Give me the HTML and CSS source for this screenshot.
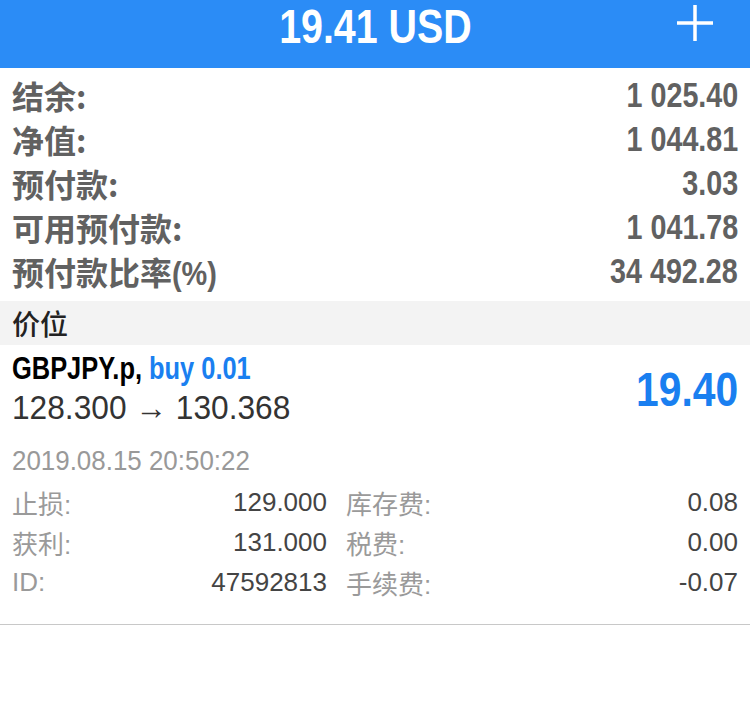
FILE: index.html
```html
<!DOCTYPE html>
<html lang="zh">
<head>
<meta charset="utf-8">
<link rel="stylesheet" href="styles.css">
</head>
<body>
<header class="topbar">
  <div class="title">19.41 USD</div>
  <svg class="plus" width="40" height="40" viewBox="0 0 40 40"><path d="M20 2V38M2 20H38" stroke="#fff" stroke-width="3.5" fill="none"/></svg>
</header>
<section class="summary">
  <div class="srow"><span class="slabel">结余:</span><span class="sval">1 025.40</span></div>
  <div class="srow"><span class="slabel">净值:</span><span class="sval">1 044.81</span></div>
  <div class="srow"><span class="slabel">预付款:</span><span class="sval">3.03</span></div>
  <div class="srow"><span class="slabel">可用预付款:</span><span class="sval">1 041.78</span></div>
  <div class="srow"><span class="slabel">预付款比率<span class="pct">(%)</span></span><span class="sval">34 492.28</span></div>
</section>
<div class="section-head">价位</div>
<section class="trade">
  <div class="trade-top">
    <div class="trade-info">
      <div class="sym">GBPJPY.p, <span class="dir">buy 0.01</span></div>
      <div class="prices">128.300 → 130.368</div>
    </div>
    <div class="profit">19.40</div>
  </div>
  <div class="date">2019.08.15 20:50:22</div>
  <div class="details">
    <span class="dl">止损:</span><span class="dv">129.000</span><span class="dl2">库存费:</span><span class="dv">0.08</span>
    <span class="dl">获利:</span><span class="dv">131.000</span><span class="dl2">税费:</span><span class="dv">0.00</span>
    <span class="dl">ID:</span><span class="dv">47592813</span><span class="dl2">手续费:</span><span class="dv">-0.07</span>
  </div>
</section>
</body>
</html>
```

FILE: styles.css
```css
html, body {
  margin: 0;
  padding: 0;
  background: #fff;
}
body {
  width: 750px;
  font-family: "Liberation Sans", "Noto Sans CJK SC", sans-serif;
}
.topbar {
  height: 68px;
  background: #2b8cf6;
  position: relative;
  display: flex;
  justify-content: center;
  align-items: flex-start;
}
.title {
  color: #fff;
  font-weight: bold;
  font-size: 48px;
  line-height: 52px;
  margin-top: 1px;
  transform: scaleX(0.82);
}
.plus {
  position: absolute;
  right: 35px;
  top: 3px;
}
.summary {
  padding: 5px 12px 8px 12px;
}
.srow {
  height: 44px;
  display: flex;
  justify-content: space-between;
  align-items: center;
  color: #616161;
  font-weight: bold;
}
.slabel {
  font-family: "Noto Sans CJK SC", sans-serif;
  font-size: 32px;
}
.pct {
  font-family: "Liberation Sans", sans-serif;
  font-size: 34px;
  display: inline-block;
  transform: scaleX(0.85);
  transform-origin: left center;
}
.sval {
  font-size: 35px;
  display: inline-block;
  transform: scaleX(0.82);
  transform-origin: right center;
}
.section-head {
  background: #f3f3f3;
  height: 44px;
  line-height: 44px;
  padding: 0 12px;
  font-size: 28px;
  color: #222;
  font-family: "Noto Sans CJK SC", sans-serif;
  font-weight: 500;
}
.trade {
  padding: 0 12px 22px 12px;
  border-bottom: 1px solid #c8c8c8;
}
.trade-top {
  display: flex;
  justify-content: space-between;
  align-items: center;
  padding-top: 5px;
}
.sym {
  font-weight: bold;
  font-size: 31px;
  color: #000;
  height: 38px;
  line-height: 38px;
  transform: scaleX(0.82);
  transform-origin: left center;
  white-space: nowrap;
}
.dir {
  color: #1a7ff0;
}
.prices {
  font-size: 33px;
  color: #333;
  height: 40px;
  line-height: 40px;
  transform: scaleX(0.96);
  transform-origin: left center;
  white-space: nowrap;
}
.profit {
  font-weight: bold;
  font-size: 48px;
  color: #1a7ff0;
  transform: scaleX(0.85);
  transform-origin: right center;
}
.date {
  font-size: 27px;
  color: #999;
  margin-top: 18px;
  height: 30px;
  line-height: 30px;
  transform: scaleX(0.96);
  transform-origin: left center;
}
.details {
  margin-top: 6px;
  display: grid;
  grid-template-columns: 80px 235px auto 1fr;
  grid-auto-rows: 40px;
  align-items: center;
  font-size: 26px;
  white-space: nowrap;
}
.dl, .dl2 {
  color: #9a9a9a;
}
.dl2 {
  padding-left: 19px;
}
.dv {
  color: #444;
  text-align: right;
}
```
